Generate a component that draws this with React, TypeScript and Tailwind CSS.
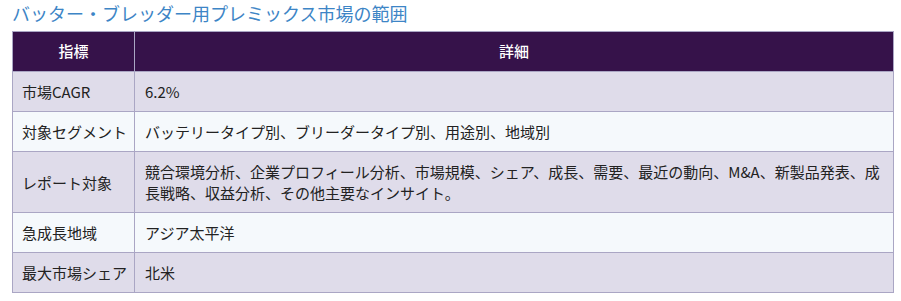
import React from "react";

const rows: [string, string][] = [
  ["市場CAGR", "6.2%"],
  ["対象セグメント", "バッテリータイプ別、ブリーダータイプ別、用途別、地域別"],
  [
    "レポート対象",
    "競合環境分析、企業プロフィール分析、市場規模、シェア、成長、需要、最近の動向、M&A、新製品発表、成長戦略、収益分析、その他主要なインサイト。",
  ],
  ["急成長地域", "アジア太平洋"],
  ["最大市場シェア", "北米"],
];

export default function App() {
  return (
    <div
      className="w-[901px] h-[301px] bg-white px-3 pt-[1px]"
      style={{ fontFamily: '"Noto Sans CJK JP", "Noto Sans", sans-serif' }}
    >
      <h2 className="text-[18px] leading-[24px] text-[#3d85c6] font-normal mb-[6px]">
        バッター・ブレッダー用プレミックス市場の範囲
      </h2>
      <table className="w-[882px] table-fixed border-collapse text-[15px] text-[#222]">
        <colgroup>
          <col className="w-[122px]" />
          <col />
        </colgroup>
        <thead>
          <tr className="bg-[#36124a] text-white">
            <th className="h-[40px] border border-[#aaa6c4] font-medium text-center">
              指標
            </th>
            <th className="h-[40px] border border-[#aaa6c4] font-medium text-center">
              詳細
            </th>
          </tr>
        </thead>
        <tbody>
          {rows.map(([k, v], i) => (
            <tr key={k} className={i % 2 === 0 ? "bg-[#dfdcea]" : "bg-[#f5f9fc]"}>
              <td className="border border-[#aaa6c4] pl-[9px] pr-0 py-[9px] leading-[21px] align-middle whitespace-nowrap overflow-visible">
                {k}
              </td>
              <td className="border border-[#aaa6c4] px-[10px] py-[9px] leading-[21px] align-middle">
                {v}
              </td>
            </tr>
          ))}
        </tbody>
      </table>
    </div>
  );
}
